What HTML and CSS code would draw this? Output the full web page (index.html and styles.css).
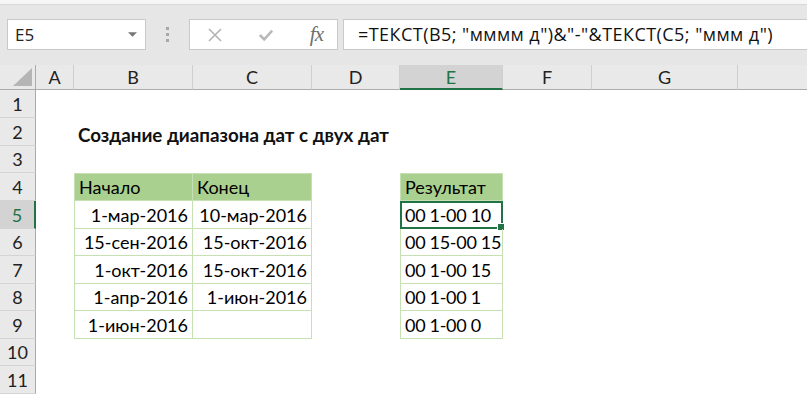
FILE: index.html
```html
<!DOCTYPE html>
<html lang="ru">
<head>
<meta charset="UTF-8">
<title>Диапазон дат</title>
<link rel="stylesheet" href="styles.css">
</head>
<body>

<div class="topstrip"></div>

<!-- formula bar -->
<div class="fbar">
  <div class="namebox">
    <span>E5</span>
    <svg class="caret" viewBox="0 0 10 6"><polygon points="0,0 10,0 5,5" /></svg>
  </div>
  <div class="grip"><i></i><i></i><i></i></div>
  <div class="fxbox">
    <svg class="ico" viewBox="0 0 16 16"><path d="M2 2 L14 14 M14 2 L2 14" class="x"/></svg>
    <svg class="ico" viewBox="0 0 18 16"><path d="M2 8 L7 13 L16 3" class="ok"/></svg>
    <span class="fx">fx</span>
  </div>
  <div class="finput">=ТЕКСТ(B5; "мммм д")&amp;"-"&amp;ТЕКСТ(C5; "ммм д")</div>
</div>

<!-- sheet -->
<div class="sheet">
  <div class="corner"><span class="tri"></span></div>
  <div class="ch">A</div><div class="ch">B</div><div class="ch">C</div><div class="ch">D</div>
  <div class="ch sel">E</div><div class="ch">F</div><div class="ch">G</div><div class="ch last"></div>

  <div class="rh">1</div><div></div><div></div><div></div><div></div><div></div><div></div><div></div><div></div>

  <div class="rh">2</div><div></div><div class="title">Создание диапазона дат с двух дат</div><div></div><div></div><div></div><div></div><div></div><div></div>

  <div class="rh">3</div><div></div><div></div><div></div><div></div><div></div><div></div><div></div><div></div>

  <div class="rh">4</div><div></div>
  <div class="c hd first top">Начало</div><div class="c hd top">Конец</div><div></div>
  <div class="c hd first top">Результат</div><div></div><div></div><div></div>

  <div class="rh sel">5</div><div></div>
  <div class="c r first">1-мар-2016</div><div class="c r">10-мар-2016</div><div></div>
  <div class="c res first active">00 1-00 10<span class="handle"></span></div><div></div><div></div><div></div>

  <div class="rh">6</div><div></div>
  <div class="c r first">15-сен-2016</div><div class="c r">15-окт-2016</div><div></div>
  <div class="c res first">00 15-00 15</div><div></div><div></div><div></div>

  <div class="rh">7</div><div></div>
  <div class="c r first">1-окт-2016</div><div class="c r">15-окт-2016</div><div></div>
  <div class="c res first">00 1-00 15</div><div></div><div></div><div></div>

  <div class="rh">8</div><div></div>
  <div class="c r first">1-апр-2016</div><div class="c r">1-июн-2016</div><div></div>
  <div class="c res first">00 1-00 1</div><div></div><div></div><div></div>

  <div class="rh">9</div><div></div>
  <div class="c r first">1-июн-2016</div><div class="c r"></div><div></div>
  <div class="c res first">00 1-00 0</div><div></div><div></div><div></div>

  <div class="rh">10</div><div></div><div></div><div></div><div></div><div></div><div></div><div></div><div></div>

  <div class="rh">11</div><div></div><div></div><div></div><div></div><div></div><div></div><div></div><div></div>
</div>

</body>
</html>
```

FILE: styles.css
```css
/* —— base —— */
*{box-sizing:border-box;margin:0;padding:0}
html,body{height:100%;background:#fff;overflow:hidden}
body{font-family:Lato,"Liberation Sans",sans-serif;color:#000}

.topstrip{height:5px;background:#f6f6f6;border-bottom:1px solid #d8d8d8}

/* —— formula bar —— */
.fbar{
  height:60px;background:#e6e6e6;
  display:flex;align-items:flex-start;padding:14px 0 0 7px;
  font-family:"Open Sans","Liberation Sans",sans-serif;
}
.namebox{
  width:139px;height:31px;background:#fff;border:1px solid #c9c9c9;
  display:flex;align-items:center;justify-content:space-between;
  padding:0 8px 0 7px;font-size:17px;color:#222;
}
.caret{width:9px;height:6px;fill:#777}
.grip{width:43px;height:31px;display:flex;flex-direction:column;align-items:center;justify-content:center;gap:3px}
.grip i{width:3px;height:3px;background:#a8a8a8;display:block}
.fxbox{
  width:149px;height:31px;background:#fff;border:1px solid #c9c9c9;
  display:flex;align-items:center;justify-content:space-between;
  padding:0 14px 0 17px;
}
.ico{width:16px;height:16px}
.ico .x{stroke:#b3b3b3;stroke-width:1.6;fill:none}
.ico .ok{stroke:#b9b9b9;stroke-width:2.8;fill:none}
.fx{font-family:"Liberation Serif",serif;font-style:italic;font-size:21px;color:#6f6f6f;letter-spacing:-1px}
.finput{
  flex:1;height:31px;margin-left:5px;background:#fff;border:1px solid #c9c9c9;border-right:0;
  padding:2px 0 0 14px;font-size:18px;letter-spacing:.45px;color:#111;white-space:nowrap;
}

/* —— sheet grid —— */
.sheet{
  display:grid;
  grid-template-columns:36px 38px 119px 119px 88px 103px 89px 146px 69px;
  grid-template-rows:25px 28px 28px 27px 28px 28px 27px 28px 27px 28px 27px 28px;
  font-size:18px;
}
.corner{background:#e9e9e9;border-bottom:1px solid #ababab;border-right:1px solid #ababab;position:relative}
.tri{
  position:absolute;right:3px;bottom:3px;width:0;height:0;
  border-left:19px solid transparent;border-bottom:18px solid #b5b5b5;
}
.ch{
  background:#e9e9e9;border-bottom:1px solid #ababab;border-right:1px solid #cfcfcf;
  display:flex;align-items:center;justify-content:center;color:#222;font-size:18px;
}
.ch.sel{background:#d3d3d3;color:#217346;border-bottom:2px solid #217346}
.ch.last{border-right:0}
.rh{
  background:#e9e9e9;border-right:1px solid #ababab;border-bottom:1px solid #d4d4d4;
  display:flex;align-items:center;justify-content:center;color:#222;font-size:18px;
}
.rh.sel{background:#d3d3d3;color:#217346;border-right:2px solid #217346}

.title{
  white-space:nowrap;font-weight:700;font-size:18.8px;color:#111;
  display:flex;align-items:flex-end;padding:0 0 0 4px;
}

/* table cells */
.c{
  border-right:1px solid #c6e0b4;border-bottom:1px solid #c6e0b4;
  display:flex;align-items:center;padding:0 4px;white-space:nowrap;position:relative;
}
.c.first{border-left:1px solid #c6e0b4}
.c.top{border-top:1px solid #c6e0b4}
.c.hd{background:#a9d08e}
.c.r{justify-content:flex-end}
.c.res{letter-spacing:-.3px}
.c.active{border:2px solid #217346;padding-left:3px}
.handle{position:absolute;right:-4px;bottom:-4px;width:6px;height:6px;background:#217346;border:1px solid #fff;box-sizing:content-box}
```
